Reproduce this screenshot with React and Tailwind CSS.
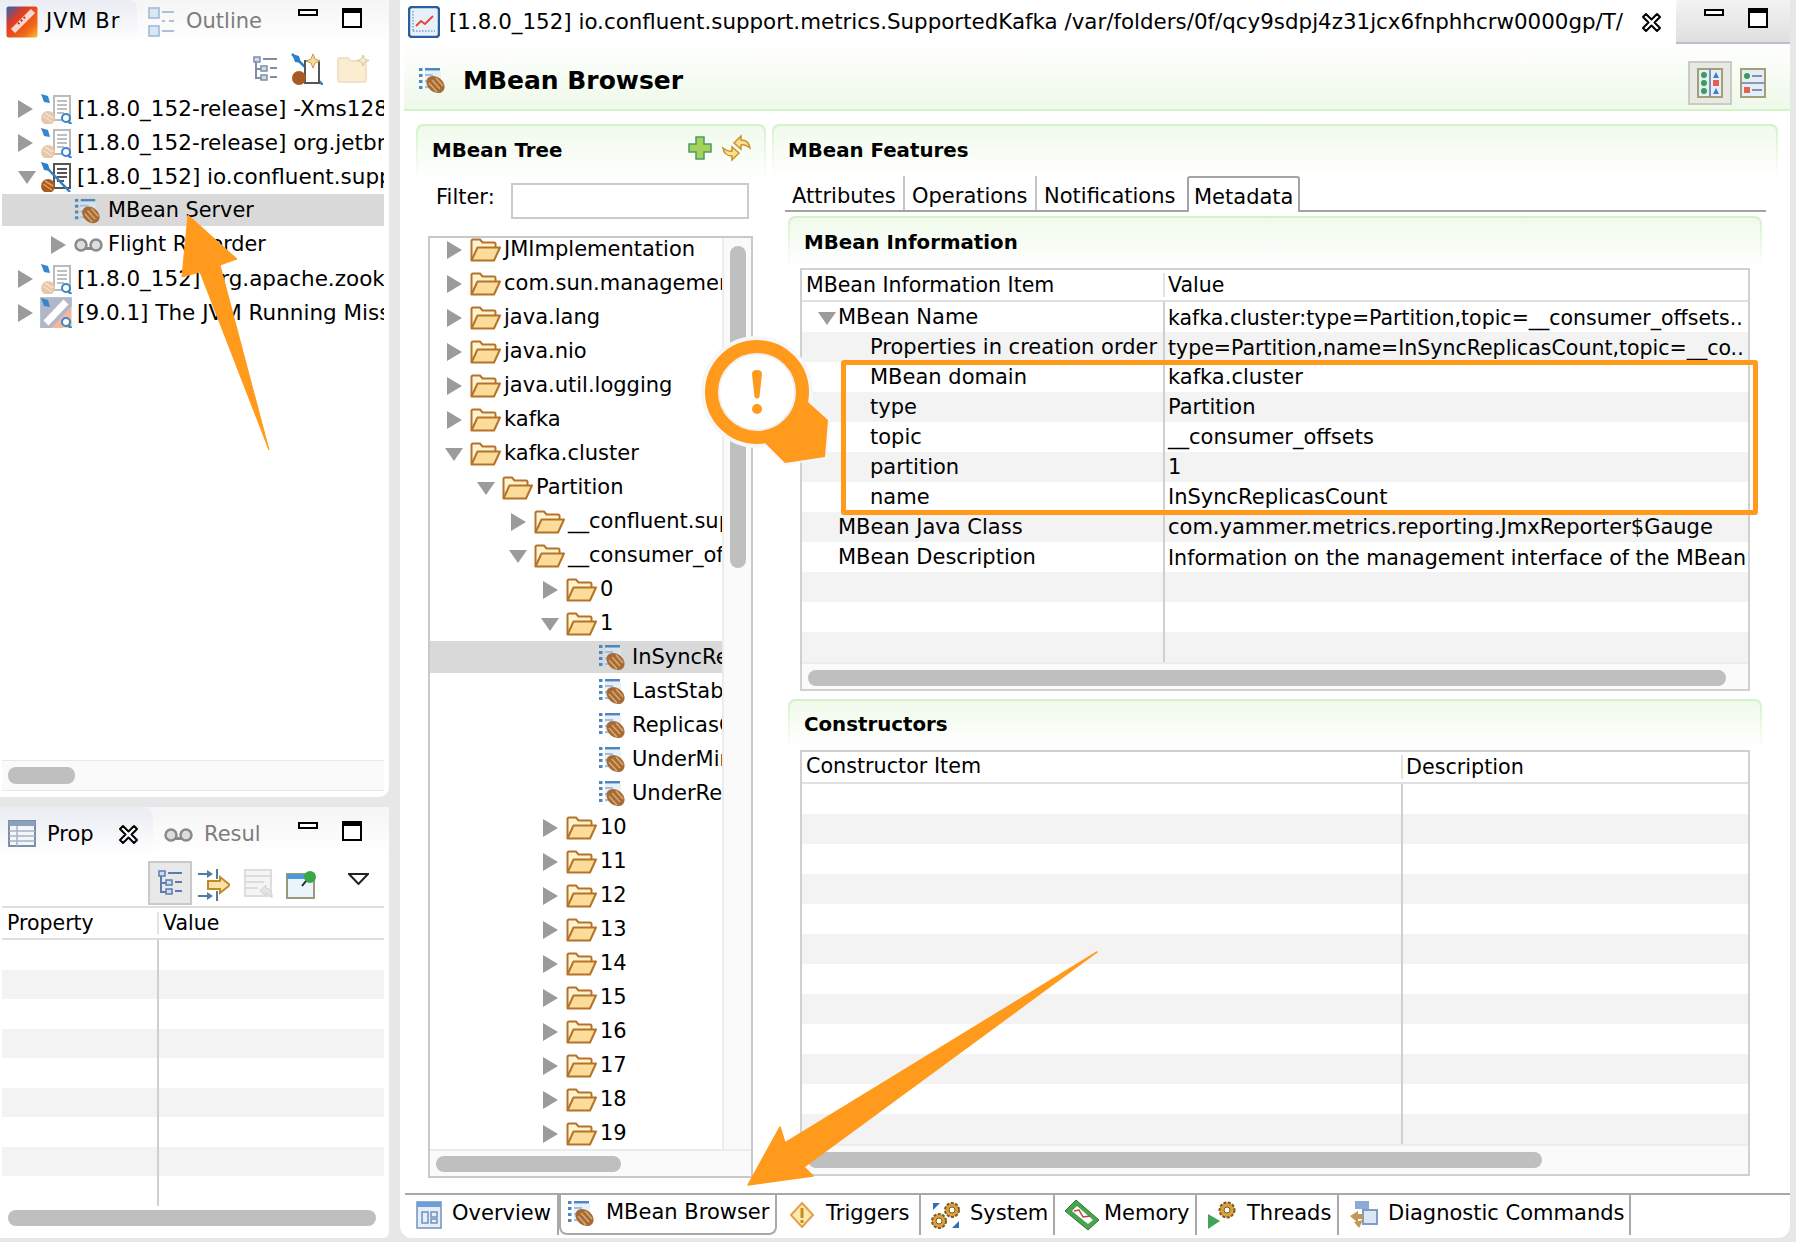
import React from "react";

const Tri = ({ down, className = "" }) =>
  down ? (
    <svg width="20" height="15" viewBox="0 0 20 15" className={`shrink-0 ${className}`}><path d="M1 1H19L10 14Z" fill="#9b9b9b" /></svg>
  ) : (
    <svg width="15" height="18" viewBox="0 0 15 18" className={`shrink-0 ${className}`}><path d="M0 0L15 9L0 18Z" fill="#9b9b9b" /></svg>
  );

const Folder = () => (
  <svg width="31" height="24" viewBox="0 0 31 24" className="shrink-0">
    <path d="M1.5 22V3Q1.5 1.5 3 1.5H10L12.500 4.500H24Q25.500 4.500 25.500 6V9" fill="#fff3cf" stroke="#b5722a" strokeWidth="2" />
    <path d="M1.500 22.500L7.500 9.500H30L24 22.500Z" fill="#fbdc98" stroke="#b5722a" strokeWidth="2" strokeLinejoin="round" />
  </svg>
);

const Bean = ({ w = 28 }) => (
  <svg width={w} height={w} viewBox="0 0 28 28" className="shrink-0">
    <g fill="#4d86c0">
      <rect x="1" y="1" width="3.500" height="3" /><rect x="1" y="7" width="3.500" height="3" /><rect x="1" y="13" width="3.500" height="3" /><rect x="1" y="19" width="3.500" height="3" />
      <rect x="7" y="1" width="15" height="2.500" /><rect x="7" y="7" width="8" height="2" /><rect x="7" y="13" width="4" height="2" /><rect x="7" y="19" width="4" height="2" />
    </g>
    <rect x="7" y="4" width="16" height="18" fill="#dbe7f3" opacity=".6" />
    <ellipse cx="17.500" cy="17.500" rx="10" ry="7.500" transform="rotate(40 17.500 17.500)" fill="#a56a36" />
    <path d="M11 16L19 25M14 13L22 22M18 11L25 19" stroke="#d9a86c" strokeWidth="1.600" />
  </svg>
);

const Conn = ({ active, rocket }) => (
  <svg width="32" height="32" viewBox="0 0 32 32" className="shrink-0" opacity={active ? 1 : 0.95}>
    {rocket ? (
      <>
        <rect x="0.500" y="0.500" width="31" height="31" fill="#f5b39b" />
        <path d="M0 0H32V9L10 32H0Z" fill="#8fb5d8" opacity=".7" />
        <path d="M6 26L26 5" stroke="#fff" strokeWidth="7" />
        <path d="M22 32L32 22V32Z" fill="#f7d28b" />
      </>
    ) : (
      <>
        <rect x="14" y="3" width="16" height="24" fill="#fff" stroke={active ? "#555" : "#b8b8b8"} strokeWidth="2" />
        <path d="M17 8H27M17 12H27M17 16H27M17 20H24" stroke={active ? "#555" : "#bcbcbc"} strokeWidth="2" />
        <circle cx="8" cy="25" r="7" fill={active ? "#a85a25" : "#e7c3a5"} />
        <path d="M3 23L12 29M5 20L13 25" stroke={active ? "#e5a15d" : "#f4e0cf"} strokeWidth="1.500" />
      </>
    )}
    <path d="M1 1L8 3L10 10L4 9Z" fill="#2f7fc8" />
    <path d="M8 8L30 31" stroke="#2f7fc8" strokeWidth={active ? 2.500 : 0} />
    {!active && <><circle cx="26" cy="25" r="4" fill="#fff" stroke="#2f7fc8" strokeWidth="2" /><path d="M28 28L32 32" stroke="#2f7fc8" strokeWidth="2.500" /></>}
  </svg>
);

const Rec = () => (
  <svg width="29" height="14" viewBox="0 0 29 14" className="shrink-0">
    <rect x="7" y="9" width="15" height="3" fill="#8a8a8a" />
    <circle cx="7" cy="7" r="5.500" fill="#ddd" stroke="#8a8a8a" strokeWidth="2.500" />
    <circle cx="22" cy="7" r="5.500" fill="#ddd" stroke="#8a8a8a" strokeWidth="2.500" />
  </svg>
);

const MinBtn = () => <svg width="20" height="8" viewBox="0 0 20 8"><rect x="1" y="1" width="18" height="5" fill="#fff" stroke="#000" strokeWidth="2" /></svg>;
const MaxBtn = () => <svg width="20" height="20" viewBox="0 0 20 20"><rect x="1" y="1" width="18" height="18" fill="#fff" stroke="#000" strokeWidth="2" /><rect x="1" y="1" width="18" height="4" fill="#000" /></svg>;
const WinBtns = ({ cls }) => (
  <div className={`flex items-start gap-[24px] ${cls}`}><div className="mt-[1px]"><MinBtn /></div><MaxBtn /></div>
);

const CloseX = () => (
  <svg width="21" height="21" viewBox="0 0 21 21" className="shrink-0">
    <path d="M2 5L5 2L10.500 7.500L16 2L19 5L13.500 10.500L19 16L16 19L10.500 13.500L5 19L2 16L7.500 10.500Z" fill="#fff" stroke="#000" strokeWidth="2" strokeLinejoin="round" />
  </svg>
);

const TreeLayout = ({ c = "#7f8ea6" }) => (
  <svg width="24" height="26" viewBox="0 0 24 26" className="shrink-0">
    <path d="M3 5V23M3 13H8M3 22H8" stroke={c} strokeWidth="2" fill="none" />
    <rect x="1" y="1" width="6" height="5" fill="#cfdcec" stroke={c} strokeWidth="1.500" />
    <rect x="8" y="10" width="6" height="5" fill="#cfdcec" stroke={c} strokeWidth="1.500" />
    <rect x="8" y="19" width="6" height="5" fill="#cfdcec" stroke={c} strokeWidth="1.500" />
    <path d="M10 3H24M17 12H24M17 21H24" stroke={c} strokeWidth="2" />
  </svg>
);

const JvmIcon = () => (
  <svg width="32" height="32" viewBox="0 0 32 32" className="shrink-0">
    <defs><linearGradient id="jv" x1="0" y1="0" x2="1" y2="1"><stop offset="0" stopColor="#2a62c0" /><stop offset=".35" stopColor="#e23b1e" /><stop offset=".75" stopColor="#f26a18" /><stop offset="1" stopColor="#f6c22a" /></linearGradient></defs>
    <rect x="0.500" y="0.500" width="31" height="31" rx="2" fill="url(#jv)" />
    <path d="M7 25L27 5" stroke="#f6d7d2" strokeWidth="6" />
    <path d="M12 18L19 11" stroke="#c83020" strokeWidth="2" strokeDasharray="2 2" />
  </svg>
);

const OutlineIcon = () => (
  <svg width="27" height="30" viewBox="0 0 27 30" className="shrink-0">
    <rect x="1" y="1" width="10" height="10" fill="#dbe6f3" stroke="#9db7d6" strokeWidth="1.500" />
    <rect x="1" y="19" width="10" height="10" fill="#dbe6f3" stroke="#9db7d6" strokeWidth="1.500" />
    <path d="M14 5H26M14 14H17M21 14H26M14 24H26" stroke="#b0c0d4" strokeWidth="2" />
  </svg>
);

const TopLeftTree = [
  { d: 0, t: "[1.8.0_152-release] -Xms128m", ic: <Conn /> },
  { d: 0, t: "[1.8.0_152-release] org.jetbrains.idea", ic: <Conn /> },
  { d: 0, open: true, t: "[1.8.0_152] io.confluent.support", ic: <Conn active /> },
  { d: 1, leaf: true, sel: true, t: "MBean Server", ic: <Bean w={27} /> },
  { d: 1, t: "Flight Recorder", ic: <Rec /> },
  { d: 0, t: "[1.8.0_152] org.apache.zookeeper", ic: <Conn /> },
  { d: 0, t: "[9.0.1] The JVM Running Missing", ic: <Conn rocket /> },
];

function LeftRow({ r }) {
  return (
    <div className={`my-[1px] flex h-[32px] shrink-0 items-center overflow-hidden pt-[2px] whitespace-nowrap ${r.sel ? "bg-[#d9d9d9]" : ""} ${r.d === 1 ? "pl-[49px] text-[20.800px]" : "pl-[16px] text-[21.500px]"}`}>
      <div className="flex w-[22px] shrink-0 items-center">{!r.leaf && <Tri down={r.open} className={r.open ? "-ml-[1px]" : ""} />}</div>
      <div className={`flex shrink-0 items-center ${r.d === 1 ? "ml-[1px] w-[34px]" : "w-[37px]"}`}>{r.ic}</div>
      <span>{r.t}</span>
    </div>
  );
}

const midRows = [
  [0, "JMImplementation"], [0, "com.sun.management"], [0, "java.lang"], [0, "java.nio"], [0, "java.util.logging"], [0, "kafka"],
  [0, "kafka.cluster", 1], [1, "Partition", 1], [2, "__confluent.support"], [2, "__consumer_offsets", 1], [3, "0"], [3, "1", 1],
  [4, "InSyncReplicasCount"], [4, "LastStableOffsetLag"], [4, "ReplicasCount"], [4, "UnderMinIsr"], [4, "UnderReplicated"],
  [3, "10"], [3, "11"], [3, "12"], [3, "13"], [3, "14"], [3, "15"], [3, "16"], [3, "17"], [3, "18"], [3, "19"],
];
const depthPad = { 0: "pl-[17px]", 1: "pl-[49px]", 2: "pl-[81px]", 3: "pl-[113px]", 4: "pl-[168px]" };

function MidRow({ d, t, open }) {
  return (
    <div className={`my-[1px] flex h-[32px] shrink-0 items-center pt-[2px] whitespace-nowrap ${depthPad[d]} ${t === "InSyncReplicasCount" ? "bg-[#d9d9d9]" : ""}`}>
      {d < 4 && <div className="flex w-[23px] shrink-0 items-center">{<Tri down={open} className={open ? "-ml-[3px]" : ""} />}</div>}
      {d < 4 ? <Folder /> : <Bean w={28} />}
      <span className={d < 4 ? "ml-[3px]" : "ml-[6px]"}>{t}</span>
    </div>
  );
}

const Section = ({ title, cls, tcls = "mt-[12px]", children }) => (
  <div className={`rounded-t-[7px] bg-gradient-to-b from-[#d3f2c9] to-white px-[2px] pt-[2px] ${cls}`}>
    <div className="flex h-full items-start justify-between rounded-t-[6px] bg-gradient-to-b from-[#f0faeb] to-white pl-[14px]">
      <span className={`${tcls} text-[19.800px] leading-[26px] font-bold`}>{title}</span>
      {children}
    </div>
  </div>
);

const infoRows = [
  [1, "MBean Name", "kafka.cluster:type=Partition,topic=__consumer_offsets..", true, "text-[20.500px]"],
  [2, "Properties in creation order", "type=Partition,name=InSyncReplicasCount,topic=__co..", false, "text-[20.500px]"],
  [2, "MBean domain", "kafka.cluster"],
  [2, "type", "Partition"],
  [2, "topic", "__consumer_offsets"],
  [2, "partition", "1"],
  [2, "name", "InSyncReplicasCount"],
  [1, "MBean Java Class", "com.yammer.metrics.reporting.JmxReporter$Gauge"],
  [1, "MBean Description", "Information on the management interface of the MBean", false, "text-[20.600px]"],
  [0, "", ""], [0, "", ""], [0, "", ""],
];

const HScroll = ({ cls, thumb }) => (
  <div className={`shrink-0 border-t-2 border-[#ececec] bg-[#fafafa] ${cls}`}>{thumb}</div>
);

const bottomTabs = [
  { t: "Overview", w: "w-[154px]", pl: "pl-[11px]", gap: "gap-[10px]", ic: <svg width="26" height="28" viewBox="0 0 26 28"><rect x="1" y="1" width="24" height="26" fill="#e6eef7" stroke="#6f93bd" strokeWidth="1.500" /><rect x="1" y="1" width="24" height="5" fill="#6b9fd6" /><rect x="6" y="11" width="6" height="11" fill="none" stroke="#6f93bd" strokeWidth="1.500" /><rect x="15" y="11" width="6" height="5" fill="none" stroke="#6f93bd" strokeWidth="1.500" /><rect x="15" y="18" width="6" height="4" fill="none" stroke="#6f93bd" strokeWidth="1.500" /></svg> },
  { t: "MBean Browser", w: "w-[218px]", pl: "pl-[6px]", gap: "gap-[11px]", ic: <Bean w={28} />, active: true },
  { t: "Triggers", w: "w-[144px]", pl: "pl-[13px]", gap: "gap-[12px]", ic: <svg width="24" height="26" viewBox="0 0 24 26"><path d="M12 1L23 13L12 25L1 13Z" fill="#fdeab0" stroke="#e5a04a" strokeWidth="2" /><rect x="10.500" y="6" width="3" height="10" fill="#c98a1e" /><rect x="10.500" y="18" width="3" height="3" fill="#c98a1e" /></svg> },
  { t: "System", w: "w-[134px]", pl: "pl-[9px]", gap: "gap-[8px]", ic: <svg width="32" height="30" viewBox="0 0 32 30"><circle cx="22" cy="10" r="7" fill="#d9a23d" stroke="#7c5a20" strokeWidth="2" strokeDasharray="3 1.500" /><circle cx="22" cy="10" r="3" fill="#fff" stroke="#7c5a20" /><circle cx="9" cy="21" r="7" fill="#d9a23d" stroke="#7c5a20" strokeWidth="2" strokeDasharray="3 1.500" /><circle cx="9" cy="21" r="3" fill="#fff" stroke="#7c5a20" /><path d="M3 3L10 3L3 10Z" fill="#2f6fb5" /><path d="M29 28L22 28L29 21Z" fill="#2f6fb5" /></svg> },
  { t: "Memory", w: "w-[142px]", pl: "pl-[9px]", gap: "gap-[4px]", ic: <svg width="36" height="32" viewBox="0 0 36 32"><path d="M1 12L12 1L35 21L24 31Z" fill="#4aa34f" stroke="#2c7a33" /><path d="M8 12L13 7L29 21L24 25Z" fill="#fff" /><path d="M10 12L15 11L19 18L26 17" stroke="#d23b3b" strokeWidth="1.500" fill="none" /></svg> },
  { t: "Threads", w: "w-[142px]", pl: "pl-[11px]", gap: "gap-[10px]", ic: <svg width="29" height="30" viewBox="0 0 29 30"><path d="M0 14L12 21L0 29Z" fill="#3fa45a" /><circle cx="19" cy="10" r="7.500" fill="#d9a23d" stroke="#7c5a20" strokeWidth="2" strokeDasharray="3 1.500" /><circle cx="19" cy="10" r="3" fill="#fff" stroke="#7c5a20" /></svg> },
  { t: "Diagnostic Commands", w: "w-[292px]", pl: "pl-[10px]", gap: "gap-[10px]", ic: <svg width="29" height="30" viewBox="0 0 29 30"><rect x="6" y="1" width="14" height="8" fill="#8fa9d6" /><rect x="14" y="10" width="14" height="14" fill="#dce7f5" stroke="#7f9cc9" strokeWidth="2" /><path d="M1 16L9 11L9 14H14V19H9V23Z" fill="#c09a55" /><path d="M5 22L14 20L10 28Z" fill="#c09a55" /></svg> },
];

export default function App() {
  return (
    <div className="relative flex h-[1242px] w-[1796px] overflow-hidden bg-[#e7e7e7] font-['DejaVu_Sans',sans-serif] text-[21px] text-black">
      {/* left column */}
      <div className="flex h-full w-[389px] shrink-0 flex-col">
        <div className="flex h-[797px] flex-col rounded-br-[10px] bg-white">
          <div className="flex h-[43px] shrink-0 items-start bg-gradient-to-b from-[#f5f5f5] to-white">
            <div className="flex h-[43px] w-[137px] items-center gap-[8px] rounded-tr-[8px] bg-gradient-to-b from-[#e9ecf3] to-white pl-[6px]">
              <JvmIcon /><span className="tracking-[1px]">JVM Br</span>
            </div>
            <div className="flex h-[43px] items-center gap-[11px] pl-[11px] text-[#7d7d7d]"><OutlineIcon /><span>Outline</span></div>
            <WinBtns cls="mt-[8px] mr-[27px] ml-auto" />
          </div>
          <div className="flex h-[48px] shrink-0 items-center justify-end gap-[14px] pt-[4px] pr-[20px]">
            <TreeLayout />
            <svg width="32" height="32" viewBox="0 0 32 32"><path d="M1 1L32 32" stroke="#2f7fc8" strokeWidth="2.500" /><rect x="14" y="8" width="14" height="22" fill="#fff" stroke="#555" strokeWidth="2" /><circle cx="8" cy="25" r="7" fill="#a85a25" /><path d="M1 1L8 3L10 10L4 9Z" fill="#2f7fc8" /><path d="M22 1L24 6L29 8L24 10L22 15L20 10L15 8L20 6Z" fill="#f6dc9b" stroke="#c59a4c" /></svg>
            <svg width="32" height="28" viewBox="0 0 32 28"><path d="M1 5Q1 3 3 3H11L14 6H27Q29 6 29 8V25Q29 27 27 27H3Q1 27 1 25Z" fill="#fbedd0" stroke="#efe2c6" strokeWidth="2" /><path d="M26 0L27.500 4L32 5.500L27.500 7L26 11L24.500 7L20 5.500L24.500 4Z" fill="#fbedd0" stroke="#d9c597" /></svg>
          </div>
          <div className="flex w-[384px] flex-1 flex-col pl-[2px]">
            <div className="flex flex-1 flex-col overflow-hidden">
              {TopLeftTree.map((r) => <LeftRow key={r.t} r={r} />)}
            </div>
            <div className="mb-[6px] flex h-[31px] shrink-0 items-center border-y border-[#e8e8e8] bg-[#fafafa] pl-[6px]">
              <div className="h-[17px] w-[67px] rounded-[8px] bg-[#bfbfbf]" />
            </div>
          </div>
        </div>
        <div className="mt-[10px] flex h-[431px] flex-col rounded-tr-[10px] rounded-br-[6px] bg-white">
          <div className="flex h-[48px] shrink-0 items-start bg-gradient-to-b from-[#f5f5f5] to-white">
            <div className="flex h-[48px] w-[153px] items-center rounded-tr-[10px] bg-gradient-to-b from-[#e9ecf3] to-white pt-[8px] pl-[8px]">
              <svg width="28" height="27" viewBox="0 0 28 27" className="-mt-[4px] shrink-0"><rect x="1" y="1" width="26" height="25" fill="#f3f5f9" stroke="#7d8fa8" strokeWidth="2" /><rect x="1" y="1" width="26" height="5" fill="#8ca0bd" /><path d="M1 11H27M1 16H27M1 21H27M9 6V26" stroke="#a5b3c7" strokeWidth="1.500" /></svg>
              <span className="ml-[11px] w-[71px] shrink-0">Prop</span>
              <span className="-mt-[2px]"><CloseX /></span>
            </div>
            <div className="flex h-[48px] items-center gap-[11px] pt-[8px] pl-[11px] text-[#7d7d7d]"><Rec /><span>Resul</span></div>
            <WinBtns cls="mt-[14px] mr-[27px] ml-auto" />
          </div>
          <div className="flex h-[51px] shrink-0 items-start pl-[148px]">
            <div className="mt-[6px] flex h-[44px] w-[44px] items-center justify-center border-2 border-[#c9c9c9] bg-[#e8e8e8]"><TreeLayout c="#5c7cb0" /></div>
            <div className="mt-[14px] ml-[6px]"><svg width="32" height="32" viewBox="0 0 32 32"><path d="M0 5H11M0 27H11" stroke="#4f7ca5" strokeWidth="2" /><path d="M9 1L15 5L9 9ZM9 23L15 27L9 31Z" fill="#4f7ca5" /><path d="M19 0V10M19 22V32" stroke="#4f7ca5" strokeWidth="2" /><path d="M10 12H22V8L32 16L22 24V20H10Z" fill="#f9e2a8" stroke="#c08a28" strokeWidth="2" /></svg></div>
            <div className="mt-[14px] ml-[14px]"><svg width="30" height="30" viewBox="0 0 30 30"><rect x="1" y="1" width="26" height="26" fill="#f4f4f4" stroke="#ddd" strokeWidth="2" /><path d="M1 7H27M1 13H20M1 19H14" stroke="#ddd" strokeWidth="2" /><path d="M16 22L22 16V19Q29 20 28 29Q25 24 22 24V27Z" fill="#e4e4e4" stroke="#d2d2d2" /></svg></div>
            <div className="mt-[14px] ml-[12px]"><svg width="32" height="30" viewBox="0 0 32 30"><rect x="1" y="5" width="27" height="24" fill="#eaf4fb" stroke="#9a9a78" strokeWidth="2" /><rect x="1" y="5" width="19" height="5" fill="#4f97d6" /><circle cx="24" cy="8" r="6" fill="#3aa648" /><path d="M20 12L16 17" stroke="#222" strokeWidth="2" /></svg></div>
            <div className="mt-[18px] ml-[30px]"><svg width="21" height="12" viewBox="0 0 21 12"><path d="M1 1H20L10.500 11Z" fill="#fff" stroke="#222" strokeWidth="2" /></svg></div>
          </div>
          <div className="ml-[2px] flex w-[382px] flex-1 flex-col border-t-2 border-[#dedede]">
            <div className="flex h-[32px] shrink-0 items-center border-b-2 border-[#dedede] text-[20.500px]">
              <div className="w-[155px] pl-[5px]">Property</div>
              <div className="h-[22px] border-l-2 border-[#e2e2e2] pl-[4px] leading-[22px]">Value</div>
            </div>
            <div className="flex flex-1 flex-col overflow-hidden">
              {[0, 1, 2, 3, 4, 5, 6, 7, 8].map((i) => (
                <div key={i} className={`h-[29.500px] shrink-0 ${i % 2 ? "bg-[#f3f3f3]" : "bg-white"}`}>
                  <div className="ml-[155px] h-full w-[2px] bg-[#cfcfcf]" />
                </div>
              ))}
            </div>
            <div className="mb-[10px] flex h-[25px] shrink-0 items-center pl-[6px]">
              <div className="h-[16px] w-[368px] rounded-[8px] bg-[#bfbfbf]" />
            </div>
          </div>
        </div>
      </div>

      {/* main column */}
      <div className="ml-[11px] flex h-[1238px] w-[1390px] shrink-0 flex-col rounded-b-[12px] bg-white">
        <div className="flex h-[44px] shrink-0">
          <div className="flex w-[1276px] items-center pl-[8px]">
            <svg width="32" height="32" viewBox="0 0 32 32" className="shrink-0"><rect x="1" y="1" width="30" height="30" rx="3" fill="#e8f1fa" stroke="#2a5f9e" strokeWidth="2.500" /><path d="M5 25H27M5 5V25" stroke="#7a9cc4" strokeWidth="1.500" strokeDasharray="1.500 1.500" /><path d="M8 20L13 15L17 18L25 10" stroke="#e5483c" strokeWidth="2" fill="none" /></svg>
            <span className="ml-[9px] whitespace-nowrap text-[21.400px]">[1.8.0_152] io.confluent.support.metrics.SupportedKafka /var/folders/0f/qcy9sdpj4z31jcx6fnphhcrw0000gp/T/</span>
            <span className="ml-[18px]"><CloseX /></span>
          </div>
          <div className="flex flex-1 items-start rounded-tl-[4px] border-b-2 border-[#b8bdd0] bg-gradient-to-b from-[#f3f3f3] to-[#dfdfdf] pt-[8px] pl-[28px]">
            <WinBtns cls="" />
          </div>
        </div>

        <div className="ml-[4px] flex h-[67px] w-[1386px] shrink-0 items-center border-b-2 border-[#d3f2c9] bg-gradient-to-b from-white to-[#eef9e9] pt-[9px] pl-[14px]">
          <Bean w={28} />
          <span className="ml-[17px] text-[25px] font-bold">MBean Browser</span>
          <div className="mt-[3px] ml-auto flex items-center gap-[8px] pr-[24px]">
            <div className="flex h-[44px] w-[44px] items-center justify-center border-2 border-[#c9ccc2] bg-[#e7e9e2]">
              <svg width="26" height="30" viewBox="0 0 26 30"><rect x="1" y="1" width="24" height="28" fill="#e4eef7" stroke="#a39f7a" strokeWidth="2" /><path d="M13 1V29" stroke="#7c93b3" strokeWidth="2" /><g fill="#3d9a5a"><circle cx="7" cy="7" r="3" /><circle cx="7" cy="15" r="3" /><circle cx="7" cy="23" r="3" /></g><path d="M19 4L22 10H16ZM19 20L22 26H16Z" fill="#3f7cc9" /><rect x="16" y="12" width="6" height="6" fill="#e5604f" /></svg>
            </div>
            <svg width="26" height="30" viewBox="0 0 26 30"><rect x="1" y="1" width="24" height="28" fill="#e4eef7" stroke="#a39f7a" strokeWidth="2" /><path d="M1 15H25" stroke="#8a9ab5" strokeWidth="2" /><circle cx="7" cy="8" r="3" fill="#3d9a5a" /><rect x="4" y="19" width="6" height="6" fill="#e5604f" /><path d="M12 8H22M12 22H22" stroke="#7c93b3" strokeWidth="2" /></svg>
          </div>
        </div>

        <div className="flex flex-1 pt-[13px] pl-[16px]">
          <div className="w-[350px] shrink-0">
            <Section title="MBean Tree" cls="h-[56px]">
              <div className="mt-[6px] mr-[13px] flex items-start gap-[10px]">
                <svg width="24" height="24" viewBox="0 0 24 24" className="mt-[4px]"><path d="M8 1H16V8H23V16H16V23H8V16H1V8H8Z" fill="#a6d25a" stroke="#4c9a6a" strokeWidth="1.500" /></svg>
                <svg width="29" height="32" viewBox="0 0 29 32"><path d="M12 11L19 4V8Q27 8 28 16Q23 12 19 13V17Z" fill="#fbe08e" stroke="#c9902c" strokeWidth="1.500" /><path d="M17 21L10 28V24Q2 24 1 16Q6 20 10 19V15Z" fill="#fbe08e" stroke="#c9902c" strokeWidth="1.500" /></svg>
              </div>
            </Section>
            <div className="mt-[3px] flex h-[36px] items-start">
              <span className="ml-[20px] w-[75px] shrink-0 pt-[1px] leading-[26px]">Filter:</span>
              <div className="h-[36px] w-[238px] border-2 border-[#cbcbcb] bg-white" />
            </div>
            <div className="mt-[17px] ml-[12px] flex h-[942px] w-[325px] flex-col border-2 border-[#c9c9c9]">
              <div className="flex min-h-0 flex-1">
                <div className="w-[292px] overflow-hidden">
                  <div className="-mt-[6px] flex flex-col">
                    {midRows.map((r, i) => <MidRow key={i} d={r[0]} t={r[1]} open={r[2]} />)}
                  </div>
                </div>
                <div className="w-[29px] shrink-0 border-l-2 border-[#ececec] bg-[#fafafa] pt-[8px] pl-[6px]">
                  <div className="h-[322px] w-[16px] rounded-[8px] bg-[#bfbfbf]" />
                </div>
              </div>
              <HScroll cls="h-[27px] pt-[5px] pl-[6px]" thumb={<div className="h-[16px] w-[185px] rounded-[8px] bg-[#bfbfbf]" />} />
            </div>
          </div>

          <div className="ml-[6px] w-[1006px] shrink-0">
            <Section title="MBean Features" cls="h-[52px]" />
            <div className="ml-[13px] flex h-[36px] w-[981px] items-stretch border-b-2 border-[#a3a3a3]">
              <div className="flex w-[120px] items-center border-r-2 border-[#c5c5c5] pt-[8px] pl-[7px]">Attributes</div>
              <div className="flex w-[132px] items-center border-r-2 border-[#c5c5c5] pt-[8px] pl-[7px]">Operations</div>
              <div className="flex w-[150px] items-center pt-[8px] pl-[7px]">Notifications</div>
              <div className="-mb-[2px] flex w-[113px] items-center rounded-t-[3px] border-x-2 border-t-2 border-[#a3a3a3] bg-white pt-[5px] pl-[5px]">Metadata</div>
            </div>
            <div className="mt-[4px] ml-[16px] w-[974px]">
              <Section title="MBean Information" cls="h-[52px]" />
              <div className="ml-[12px] flex h-[423px] w-[950px] flex-col border-2 border-[#d0d0d0]">
                <div className="flex h-[32px] shrink-0 items-center border-b-2 border-[#e0e0e0] text-[20.500px]">
                  <div className="w-[361px] pl-[4px]">MBean Information Item</div>
                  <div className="h-[24px] border-l-2 border-[#e2e2e2] pl-[3px] leading-[24px]">Value</div>
                </div>
                {infoRows.map((r, i) => (
                  <div key={i} className={`flex h-[30px] shrink-0 items-center overflow-hidden whitespace-nowrap ${i % 2 ? "bg-[#f3f3f3]" : "bg-white"}`}>
                    <div className={`flex h-full w-[361px] shrink-0 items-center pt-[2px] ${r[0] === 2 ? "pl-[68px]" : r[0] === 1 ? "pl-[36px]" : ""}`}>
                      {r[3] && <Tri down className="-ml-[21px] mr-[1px]" />}
                      {r[1]}
                    </div>
                    <div className={`flex h-full items-center border-l-2 border-[#cfcfcf] pt-[2px] pl-[3px] ${r[4] || ""}`}>{r[2]}</div>
                  </div>
                ))}
                <HScroll cls="flex-1 pt-[6px] pl-[6px]" thumb={<div className="h-[16px] w-[918px] rounded-[8px] bg-[#bfbfbf]" />} />
              </div>
              <Section title="Constructors" cls="mt-[8px] h-[51px]" tcls="mt-[11px]" />
              <div className="ml-[12px] flex h-[426px] w-[950px] flex-col border-2 border-[#d0d0d0]">
                <div className="flex h-[32px] shrink-0 items-center border-b-2 border-[#e0e0e0] text-[20.700px]">
                  <div className="w-[599px] pl-[4px]">Constructor Item</div>
                  <div className="h-[24px] border-l-2 border-[#e2e2e2] pl-[3px] leading-[24px]">Description</div>
                </div>
                <div className="flex min-h-0 flex-1 flex-col overflow-hidden">
                  {[0, 1, 2, 3, 4, 5, 6, 7, 8, 9, 10, 11].map((i) => (
                    <div key={i} className={`h-[30px] shrink-0 ${i % 2 ? "bg-[#f3f3f3]" : "bg-white"}`}>
                      <div className="ml-[599px] h-full w-[2px] bg-[#cfcfcf]" />
                    </div>
                  ))}
                </div>
                <HScroll cls="h-[30px] pt-[6px] pl-[6px]" thumb={<div className="h-[16px] w-[734px] rounded-[8px] bg-[#bfbfbf]" />} />
              </div>
            </div>
          </div>
        </div>

        <div className="ml-[5px] flex h-[45px] shrink-0 items-stretch self-stretch">
          <div className="flex h-[42px] w-full border-t-2 border-[#a8a8a8]">
            {bottomTabs.map((b) => (
              <div key={b.t} className={`flex h-[40px] shrink-0 items-center whitespace-nowrap ${b.w} ${b.pl} ${b.gap} ${b.active ? "rounded-b-[8px] border-x-2 border-b-2 border-[#a8a8a8]" : "border-r-2 border-[#a8a8a8]"}`}>
                {b.ic}<span className="-mt-[3px]">{b.t}</span>
              </div>
            ))}
          </div>
        </div>
      </div>

      {/* annotations over the screenshot */}
      <div className="pointer-events-none absolute top-[360px] left-[841px] h-[155px] w-[917px] rounded-[3px] border-[5px] border-[#ff9a1c]" />
      <svg width="1796" height="1242" viewBox="0 0 1796 1242" className="pointer-events-none absolute top-0 left-0">
        <path d="M188 215L237 259L220 265L269 450L200 272L182 277Z" fill="#ff9a1c" stroke="#ff9a1c" strokeWidth="1" strokeLinejoin="round" />
        <path d="M748 1185L780 1127L785 1143L1097 952L804 1167L813 1176Z" fill="#ff9a1c" stroke="#ff9a1c" strokeWidth="1.500" strokeLinejoin="round" />
        <path d="M808 402L828 420L825 457L785 463L765 443Z" fill="#ff9a1c" stroke="#f7f7f7" strokeWidth="4" strokeLinejoin="round" />
        <circle cx="757" cy="392" r="54" fill="#ff9a1c" stroke="#f7f7f7" strokeWidth="4" />
        <path d="M808 402L828 420L825 457L785 463L765 443Z" fill="#ff9a1c" />
        <circle cx="757" cy="392" r="38" fill="#fff" stroke="#f0f0f0" strokeWidth="2" />
        <path d="M752 374Q752 370 757 370Q762 370 762 374L759.500 397Q757 400 754.500 397Z" fill="#ff9a1c" />
        <circle cx="757" cy="409" r="5" fill="#ff9a1c" />
      </svg>
    </div>
  );
}
